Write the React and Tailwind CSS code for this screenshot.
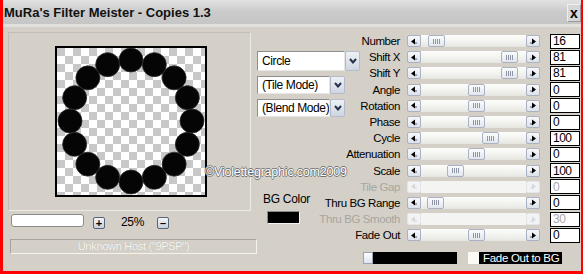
import React from "react";

const rows = [
  { label: "Number", pos: 7, value: "16" },
  { label: "Shift X", pos: 80, value: "81" },
  { label: "Shift Y", pos: 80, value: "81" },
  { label: "Angle", pos: 47, value: "0" },
  { label: "Rotation", pos: 47, value: "0" },
  { label: "Phase", pos: 47, value: "0" },
  { label: "Cycle", pos: 61, value: "100" },
  { label: "Attenuation", pos: 47, value: "0" },
  { label: "Scale", pos: 26, value: "100" },
  { label: "Tile Gap", pos: null, value: "0", disabled: true },
  { label: "Thru BG Range", pos: 6, value: "0" },
  { label: "Thru BG Smooth", pos: null, value: "30", disabled: true },
  { label: "Fade Out", pos: 47, value: "0" },
];

function ArrowBtn({ dir, disabled }) {
  return (
    <div
      className={`flex h-[12px] w-[14px] items-center justify-center rounded-[2px] border ${
        disabled
          ? "border-[#e4e6ea] bg-[#f2f3f4]"
          : "border-[#a9b1c2] bg-gradient-to-b from-[#f7f8fa] to-[#dde2ea]"
      }`}
    >
      <svg width="8" height="7" viewBox="0 0 8 7">
        {dir === "left" ? (
          <>
            <polygon points="1,3.5 5,0.5 5,6.5" fill={disabled ? "#d6d8dc" : "#000"} />
            <rect x="5" y="4" width="2" height="2" fill={disabled ? "#e4e6e8" : "#9aa0aa"} />
          </>
        ) : (
          <>
            <polygon points="7,3.5 3,0.5 3,6.5" fill={disabled ? "#d6d8dc" : "#000"} />
            <rect x="1" y="4" width="2" height="2" fill={disabled ? "#e4e6e8" : "#9aa0aa"} />
          </>
        )}
      </svg>
    </div>
  );
}

function Slider({ pos, disabled }) {
  return (
    <div className="flex h-[12px] w-[133px]">
      <ArrowBtn dir="left" disabled={disabled} />
      <div
        className={`flex h-[12px] flex-1 items-center ${
          disabled ? "bg-[#f4f4f2]" : "bg-gradient-to-b from-[#fdfdfc] via-[#f3f3f0] to-[#e6e6e1]"
        }`}
        style={{ paddingLeft: pos ?? 0 }}
      >
        {pos != null && (
          <div className="flex h-[12px] w-[17px] items-center justify-center gap-[1px] rounded-[2px] border border-[#a9b1c2] bg-gradient-to-b from-[#fbfcfd] to-[#e2e6ec]">
            <span className="h-[5px] w-px bg-[#8d95a6]" />
            <span className="h-[5px] w-px bg-[#8d95a6]" />
            <span className="h-[5px] w-px bg-[#8d95a6]" />
            <span className="h-[5px] w-px bg-[#8d95a6]" />
          </div>
        )}
      </div>
      <ArrowBtn dir="right" disabled={disabled} />
    </div>
  );
}

function DropBtn() {
  return (
    <div className="flex w-[15px] items-center justify-center rounded-[2px] border border-[#b4bccb] bg-gradient-to-b from-[#eef1f6] to-[#cfd6e2]">
      <svg width="8" height="6" viewBox="0 0 8 6">
        <polyline points="1,1 4,4.5 7,1" fill="none" stroke="#26324a" strokeWidth="2" />
      </svg>
    </div>
  );
}

function Select({ text, w, h }) {
  return (
    <div className={`flex ${h}`}>
      <div
        className={`${w} flex items-center overflow-hidden whitespace-nowrap border border-[#8e8e8e] border-b-[#e6e6e6] border-r-[#e6e6e6] bg-white pl-[4px] text-[12px] tracking-[-0.4px] text-black`}
      >
        {text}
      </div>
      <DropBtn />
    </div>
  );
}

function Preview() {
  const dots = Array.from({ length: 16 }, (_, i) => {
    const a = (i / 16) * Math.PI * 2 - Math.PI / 2;
    return { x: 74 + Math.cos(a) * 61, y: 73 + Math.sin(a) * 61 };
  });
  return (
    <div className="ml-[46px] mt-[13px] h-[151px] w-[152px] border-2 border-black">
      <svg width="148" height="147" viewBox="0 0 148 147">
        <defs>
          <pattern id="chk" width="16" height="16" patternUnits="userSpaceOnUse">
            <rect width="16" height="16" fill="#fff" />
            <rect width="8" height="8" fill="#c8c8c8" />
            <rect x="8" y="8" width="8" height="8" fill="#c8c8c8" />
          </pattern>
        </defs>
        <rect width="148" height="147" fill="url(#chk)" />
        {dots.map((d, i) => (
          <circle key={i} cx={d.x} cy={d.y} r="12" fill="#050505" stroke="#2a2a2a" strokeWidth="0.8" />
        ))}
      </svg>
    </div>
  );
}

export default function App() {
  return (
    <div className="relative flex h-[274px] w-[583px] flex-col border-b-[3px] border-l-[3px] border-r-[2px] border-[#ff0000] bg-[#d4d0c8] font-['Liberation_Sans',sans-serif] text-black">
      {/* Title bar */}
      <div className="flex h-[27px] border-b-[3px] border-[#e2e0dc] bg-gradient-to-b from-[#e2e2e2] via-[#cacaca] to-[#c6c6c6]">
        <div className="pl-[1px] pt-[5px] text-[13px] font-bold leading-[15px] text-[#111]">
          MuRa's Filter Meister - Copies 1.3
        </div>
        <div className="ml-auto mt-[4px] flex h-[18px] w-[14px] items-center justify-center border border-[#f0f0f0] border-b-[#9a9a9a] border-r-[#9a9a9a] bg-[#d6d6d6] text-[14px] font-bold leading-none">
          x
        </div>
      </div>

      <div className="relative flex flex-1">
        {/* Left column */}
        <div className="flex w-[254px] flex-col">
          <div className="ml-[5px] mt-[5px] h-[179px] w-[243px] border border-[#c2beb6] border-b-[#ecebe8] border-r-[#ecebe8]">
            <Preview />
          </div>
          <div className="mt-[3px] flex items-start">
            <div className="ml-[8px] h-[13px] w-[73px] rounded-[3px] border border-[#8a8a8a] bg-white" />
            <div className="ml-[9px] mt-[3px] flex h-[12px] w-[12px] items-center justify-center rounded-[2px] border border-[#5a6478] bg-gradient-to-b from-[#f2f4f8] to-[#c9d0dc] text-[11px] font-bold leading-none">
              +
            </div>
            <div className="ml-[16px] mt-[1px] text-[12px] leading-[14px] tracking-[-0.3px]">25%</div>
            <div className="ml-[13px] mt-[3px] flex h-[12px] w-[12px] items-center justify-center rounded-[2px] border border-[#5a6478] bg-gradient-to-b from-[#f2f4f8] to-[#c9d0dc] text-[11px] font-bold leading-none">
              –
            </div>
          </div>
          <div className="ml-[7px] mt-[10px] flex h-[15px] w-[247px] items-center justify-center border border-[#a8a49c] border-b-[#f4f3f0] border-r-[#f4f3f0] text-[11px] tracking-[-0.3px] text-[#f6f5f2] [text-shadow:0_0_1px_#b0aca4]">
            Unknown Host ("9PSP")
          </div>
        </div>

        {/* Middle column */}
        <div className="flex w-[105px] flex-col">
          <div className="mt-[24px]">
            <Select text="Circle" w="w-[88px]" h="h-[20px]" />
          </div>
          <div className="mt-[5px]">
            <Select text="(Tile Mode)" w="w-[73px]" h="h-[18px]" />
          </div>
          <div className="mt-[5px]">
            <Select text="(Blend Mode)" w="w-[73px]" h="h-[18px]" />
          </div>
          <div className="ml-[6px] mt-[76px] text-[12px] leading-[12px] tracking-[-0.3px]">BG Color</div>
          <div className="ml-[10px] mt-[6px] h-[13px] w-[33px] border border-[#f4f4f4] border-l-[#8a8a8a] border-t-[#8a8a8a] bg-black" />
        </div>

        {/* Controls column */}
        <div className="flex w-[218px] flex-col pt-[6px]">
          {rows.map((r) => (
            <div key={r.label} className="flex h-[16.2px] items-center">
              <div
                className={`flex w-[38px] justify-end whitespace-nowrap text-[11.5px] leading-[14px] tracking-[-0.4px] ${
                  r.disabled ? "text-[#a8a59e]" : "text-black"
                }`}
              >
                {r.label}
              </div>
              <div className="ml-[7px]">
                <Slider pos={r.pos} disabled={r.disabled} />
              </div>
              <div
                className={`ml-[10px] flex h-[15px] w-[30px] items-center border border-black bg-white pl-[2px] text-[12px] tracking-[-0.5px] ${
                  r.disabled ? "text-[#a8a8a8]" : "text-black"
                }`}
              >
                {r.value}
              </div>
            </div>
          ))}
          <div className="ml-[1px] mt-[9px] flex h-[12px] items-stretch">
            <div className="w-[10px] border border-[#9aa4b4] bg-gradient-to-b from-white to-[#dde4ee]" />
            <div className="w-[84px] bg-black" />
            <div className="ml-[11px] w-[11px] bg-[#faf9f4]" />
            <div className="flex w-[83px] items-center bg-black pl-[4px] text-[11.5px] tracking-[-0.3px] text-white">
              Fade Out to BG
            </div>
          </div>
        </div>

        {/* Watermark overlay */}
        <div className="pointer-events-none absolute left-[202px] top-[138px] text-[12.5px] leading-[14px] tracking-[-0.2px] text-white [text-shadow:0.7px_0_0_#707070,-0.7px_0_0_#707070,0_0.7px_0_#707070,0_-0.7px_0_#707070]">
          ©Violettegraphic.com2009
        </div>
      </div>
    </div>
  );
}
